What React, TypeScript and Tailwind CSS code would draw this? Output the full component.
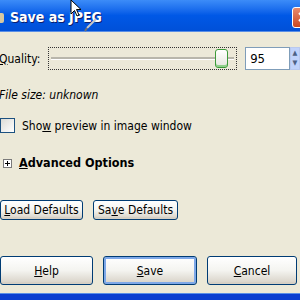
import React from "react";

const font = { fontFamily: '"DejaVu Sans Condensed", "DejaVu Sans", Tahoma, sans-serif' };

function XpButton({ children, w, h, def }: { children: React.ReactNode; w: string; h: string; def?: boolean }) {
  return (
    <div
      className={`${w} ${h} whitespace-nowrap rounded-[3px] border border-[#003c74] flex items-center justify-center text-black bg-gradient-to-b from-[#ffffff] via-[#f4f4f0] to-[#d6d0c5] ${def ? "shadow-[inset_0_0_0_2px_#7ea8e8]" : "shadow-[inset_0_-2px_0_0_#d6d0c5]"}`}
    >
      {children}
    </div>
  );
}

export default function App() {
  return (
    <div className="relative w-[300px] h-[300px] overflow-hidden bg-[#ece9d8] flex flex-col text-[12px] text-black" style={font}>
      {/* Title bar */}
      <div className="h-[32px] shrink-0 flex items-center bg-gradient-to-b from-[#3c8cf8] via-[#0058e6] to-[#0050d8] border-b border-[#5a8fe6] relative">
        <div className="w-[4px] h-[10px] bg-[#d8c8a0] rounded-r-[2px] ml-0 mt-[4px]" />
        <span className="ml-[6px] mt-[4px] text-white font-bold text-[14px] [text-shadow:1px_1px_0_#0a1e6e]">Save as JPEG</span>
        <div className="ml-auto mr-[-14px] mt-[3px] w-[22px] h-[21px] rounded-[3px] border border-white bg-gradient-to-b from-[#e88a6c] to-[#c8461f] flex items-center justify-center">
          <svg width="10" height="10" viewBox="0 0 10 10">
            <path d="M1 1 L9 9 M9 1 L1 9" stroke="white" strokeWidth="2" />
          </svg>
        </div>
      </div>

      {/* Body */}
      <div className="flex flex-col flex-1">
        {/* Quality row */}
        <div className="mt-[15px] h-[23px] flex items-center">
          <span className="ml-[-1px] w-[49px]"><u>Q</u>uality:</span>
          <div className="w-[190px] h-[23px] border border-dotted border-[#333] flex items-center px-[2px] relative">
            <div className="flex-1 h-[3px] bg-[#b8b6ab] border-b border-white" />
            <div className="absolute left-[166px] top-[1px] w-[13px] h-[19px] rounded-[3px] border border-[#3d9a3a] bg-gradient-to-b from-white to-[#e6e6de] shadow-[inset_0_-2px_0_#8fd08a]" />
          </div>
          <div className="ml-[8px] w-[45px] h-[23px] border border-[#7f9db9] bg-white flex items-center pl-[4px] text-[13px]">95</div>
          <div className="w-[10px] h-[23px] flex flex-col bg-[#c1d3fb] border border-[#b9c9ef]">
            <div className="flex-1 flex items-center justify-center text-[#4d6185] text-[7px] leading-none">▲</div>
            <div className="flex-1 flex items-center justify-center text-[#4d6185] text-[7px] leading-none">▼</div>
          </div>
        </div>

        {/* File size */}
        <div className="mt-[19px] ml-[-1px] italic h-[12px] leading-[12px]">File size: unknown</div>

        {/* Checkbox */}
        <div className="mt-[17px] flex items-center h-[15px]">
          <div className="w-[15px] h-[15px] border border-[#1c5180] bg-gradient-to-br from-[#dcdcd7] to-white" />
          <span className="ml-[7px]">Sho<u>w</u> preview in image window</span>
        </div>

        {/* Advanced */}
        <div className="mt-[25px] flex items-center h-[10px]">
          <div className="ml-[3px] w-[9px] h-[9px] border border-[#7a7a7a] bg-white flex items-center justify-center">
            <svg width="7" height="7" viewBox="0 0 7 7">
              <path d="M1 3.5 H6 M3.5 1 V6" stroke="black" strokeWidth="1" />
            </svg>
          </div>
          <span className="ml-[7px] font-bold text-[12.5px]"><u>A</u>dvanced Options</span>
        </div>

        {/* Defaults */}
        <div className="mt-[32px] flex gap-[10px]">
          <XpButton w="w-[83px]" h="h-[20px]"><span><u>L</u>oad Defaults</span></XpButton>
          <XpButton w="w-[85px]" h="h-[20px]"><span>Sa<u>v</u>e Defaults</span></XpButton>
        </div>

        {/* Bottom buttons */}
        <div className="mt-[36px] flex gap-[10px]">
          <XpButton w="w-[93px]" h="h-[29px]"><span><u>H</u>elp</span></XpButton>
          <XpButton w="w-[94px]" h="h-[29px]" def><span><u>S</u>ave</span></XpButton>
          <XpButton w="w-[90px]" h="h-[29px]"><span><u>C</u>ancel</span></XpButton>
        </div>
      </div>

      {/* Bottom window frame */}
      <div className="h-[7px] shrink-0 bg-[#0a3ed0] border-t border-[#5a8fe6]" />

      {/* Mouse cursor overlay */}
      <svg className="absolute left-[70px] top-0" width="14" height="17" viewBox="0 0 14 17">
        <path d="M1 0 L1 14 L4.5 10.5 L7 16 L9 15 L6.5 9.5 L11 9.5 Z" fill="white" stroke="black" strokeWidth="1" />
      </svg>
      <svg className="absolute left-[84px] top-[18px]" width="14" height="14" viewBox="0 0 14 14">
        <path d="M12 1 L3 10" stroke="#c8c8c8" strokeWidth="2" />
        <path d="M3 10 L1 13" stroke="#707070" strokeWidth="2" />
      </svg>
    </div>
  );
}
